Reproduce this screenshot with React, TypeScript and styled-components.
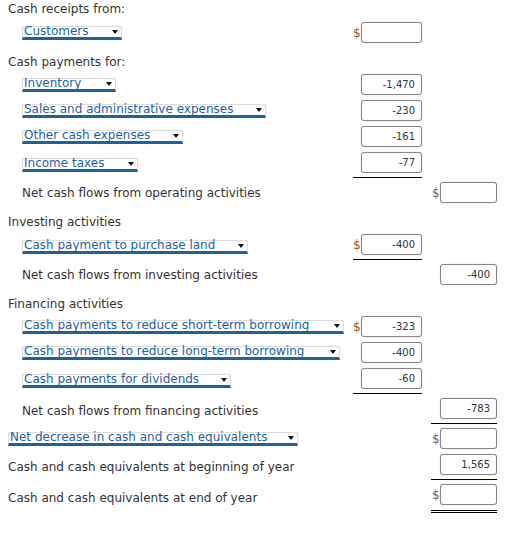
import React from 'react';
import styled, { createGlobalStyle } from 'styled-components';

type Rule = 'single' | 'double';

interface Amount {
  col: 1 | 2;
  value?: string;
  dollar?: boolean;
  rule?: Rule;
}

type Line =
  | { kind: 'heading'; text: string; first?: boolean }
  | { kind: 'select'; text: string; width: number; indent?: boolean; amount?: Amount }
  | { kind: 'text'; text: string; indent?: boolean; amount?: Amount };

const GlobalStyle = createGlobalStyle`
  body {
    margin: 0;
    background: #fff;
    font-family: "DejaVu Sans", Verdana, sans-serif;
    font-size: 12px;
    color: #333;
  }
`;

const Sheet = styled.div`
  width: 497px;
  box-sizing: border-box;
  padding: 2px 0 0 8px;
`;

const Row = styled.div`
  display: grid;
  grid-template-columns: 336px 69px 66px;
  column-gap: 9px;
  align-items: stretch;
`;

const Heading = styled.div<{ $first?: boolean }>`
  line-height: 14px;
  padding: ${(p) => (p.$first ? '0 0 4px' : '9px 0 3px')};
`;

const Label = styled.div<{ $indent?: boolean }>`
  grid-column: 1;
  min-height: 26px;
  display: flex;
  align-items: center;
  padding-left: ${(p) => (p.$indent ? 14 : 0)}px;
  white-space: nowrap;
`;

const Select = styled.div<{ $width: number }>`
  width: ${(p) => p.$width}px;
  height: 14px;
  box-sizing: border-box;
  display: flex;
  align-items: flex-start;
  justify-content: space-between;
  background: #fff;
  border: 1px solid #dcdcdc;
  border-bottom: 3px solid #23618e;
  border-radius: 3px 3px 0 0;
  box-shadow: 0 0 1px #c8c8c8;
  padding-left: 1px;
  line-height: 9px;
  color: #1f5f9e;
`;

const Arrow = styled.span`
  width: 0;
  height: 0;
  margin: 3px 3px 0 0;
  border-left: 3.5px solid transparent;
  border-right: 3.5px solid transparent;
  border-top: 4px solid #111;
`;

const Cell = styled.div<{ $col: 1 | 2; $rule?: Rule }>`
  grid-column: ${(p) => p.$col + 1};
  align-self: start;
  display: flex;
  align-items: center;
  justify-content: flex-end;
  padding-top: 2px;
  padding-bottom: ${(p) => (p.$rule === 'double' ? 5 : p.$rule ? 4 : 3)}px;
  border-bottom: ${(p) =>
    p.$rule === 'double' ? '3px double #000' : p.$rule ? '1px solid #000' : 'none'};
  margin-bottom: ${(p) => (p.$rule === 'single' ? 2 : 0)}px;
`;

const Dollar = styled.span`
  width: 8px;
  font-size: 12px;
  color: #7d6236;
  line-height: 14px;
`;

const Input = styled.input<{ $width: number }>`
  width: ${(p) => p.$width}px;
  height: 21px;
  box-sizing: border-box;
  margin: 0;
  padding: 0 6px 0 2px;
  border: 1px solid #868686;
  border-radius: 3px;
  box-shadow: 0 0 1px #b0b0b0;
  background: #fff;
  font-family: "DejaVu Sans", Verdana, sans-serif;
  font-size: 10px;
  color: #333;
  text-align: right;
  outline: none;
`;

const lines: Line[] = [
  { kind: 'heading', text: 'Cash receipts from:', first: true },
  { kind: 'select', text: 'Customers', width: 100, indent: true, amount: { col: 1, dollar: true } },
  { kind: 'heading', text: 'Cash payments for:' },
  { kind: 'select', text: 'Inventory', width: 94, indent: true, amount: { col: 1, value: '-1,470' } },
  { kind: 'select', text: 'Sales and administrative expenses', width: 244, indent: true, amount: { col: 1, value: '-230' } },
  { kind: 'select', text: 'Other cash expenses', width: 161, indent: true, amount: { col: 1, value: '-161' } },
  { kind: 'select', text: 'Income taxes', width: 116, indent: true, amount: { col: 1, value: '-77', rule: 'single' } },
  { kind: 'text', text: 'Net cash flows from operating activities', indent: true, amount: { col: 2, dollar: true } },
  { kind: 'heading', text: 'Investing activities' },
  { kind: 'select', text: 'Cash payment to purchase land', width: 226, indent: true, amount: { col: 1, dollar: true, value: '-400', rule: 'single' } },
  { kind: 'text', text: 'Net cash flows from investing activities', indent: true, amount: { col: 2, value: '-400' } },
  { kind: 'heading', text: 'Financing activities' },
  { kind: 'select', text: 'Cash payments to reduce short-term borrowing', width: 322, indent: true, amount: { col: 1, dollar: true, value: '-323' } },
  { kind: 'select', text: 'Cash payments to reduce long-term borrowing', width: 318, indent: true, amount: { col: 1, value: '-400' } },
  { kind: 'select', text: 'Cash payments for dividends', width: 209, indent: true, amount: { col: 1, value: '-60', rule: 'single' } },
  { kind: 'text', text: 'Net cash flows from financing activities', indent: true, amount: { col: 2, value: '-783', rule: 'single' } },
  { kind: 'select', text: 'Net decrease in cash and cash equivalents', width: 290, amount: { col: 2, dollar: true } },
  { kind: 'text', text: 'Cash and cash equivalents at beginning of year', amount: { col: 2, value: '1,565', rule: 'single' } },
  { kind: 'text', text: 'Cash and cash equivalents at end of year', amount: { col: 2, dollar: true, rule: 'double' } },
];

const AmountCell = ({ amount }: { amount: Amount }) => (
  <Cell $col={amount.col} $rule={amount.rule}>
    <Dollar>{amount.dollar ? '$' : ''}</Dollar>
    <Input $width={amount.col === 1 ? 61 : 57} readOnly defaultValue={amount.value ?? ''} />
  </Cell>
);

const renderLine = (line: Line, i: number) => {
  if (line.kind === 'heading') {
    return <Heading key={i} $first={line.first}>{line.text}</Heading>;
  }
  return (
    <Row key={i}>
      <Label $indent={line.indent}>
        {line.kind === 'select' ? (
          <Select $width={line.width}>
            {line.text}
            <Arrow />
          </Select>
        ) : (
          line.text
        )}
      </Label>
      {line.amount && <AmountCell amount={line.amount} />}
    </Row>
  );
};

export default function App() {
  return (
    <>
      <GlobalStyle />
      <Sheet>{lines.map(renderLine)}</Sheet>
    </>
  );
}
